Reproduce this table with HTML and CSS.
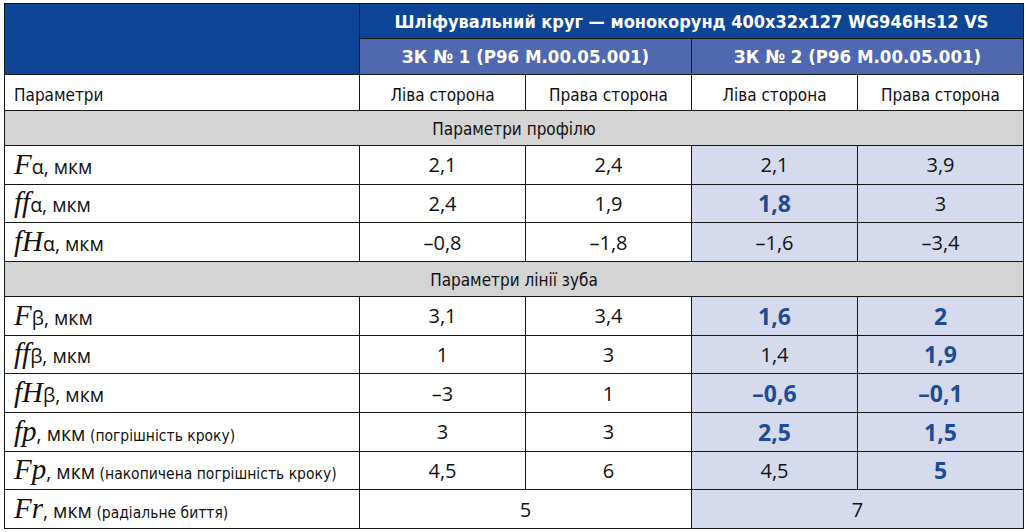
FILE: index.html
```html
<!DOCTYPE html>
<html lang="uk">
<head>
<meta charset="utf-8">
<title>Шліфувальний круг</title>
<link rel="stylesheet" href="styles.css">
</head>
<body>
<table class="grid">
  <colgroup>
    <col class="c-label">
    <col class="c-val">
    <col class="c-val">
    <col class="c-val">
    <col class="c-val">
  </colgroup>
  <tr class="row-title">
    <th class="corner" rowspan="2"></th>
    <th class="title" colspan="4">Шліфувальний круг — монокорунд 400x32x127 WG946Hs12 VS</th>
  </tr>
  <tr class="row-sub">
    <th class="sub" colspan="2">ЗК № 1 (Р96 М.00.05.001)</th>
    <th class="sub" colspan="2">ЗК № 2 (Р96 М.00.05.001)</th>
  </tr>
  <tr class="row-head">
    <td class="name">Параметри</td>
    <td>Ліва сторона</td>
    <td>Права сторона</td>
    <td>Ліва сторона</td>
    <td>Права сторона</td>
  </tr>
  <tr class="row-section">
    <td colspan="5">Параметри профілю</td>
  </tr>
  <tr class="row-data">
    <td class="name"><i class="sym">F</i><span class="unit">α, мкм</span></td>
    <td class="v">2,1</td><td class="v">2,4</td>
    <td class="v hl">2,1</td><td class="v hl">3,9</td>
  </tr>
  <tr class="row-data">
    <td class="name"><i class="sym">ff</i><span class="unit">α, мкм</span></td>
    <td class="v">2,4</td><td class="v">1,9</td>
    <td class="v hl"><b>1,8</b></td><td class="v hl">3</td>
  </tr>
  <tr class="row-data">
    <td class="name"><i class="sym">fH</i><span class="unit">α, мкм</span></td>
    <td class="v">–0,8</td><td class="v">–1,8</td>
    <td class="v hl">–1,6</td><td class="v hl">–3,4</td>
  </tr>
  <tr class="row-section">
    <td colspan="5">Параметри лінії зуба</td>
  </tr>
  <tr class="row-data">
    <td class="name"><i class="sym">F</i><span class="unit">β, мкм</span></td>
    <td class="v">3,1</td><td class="v">3,4</td>
    <td class="v hl"><b>1,6</b></td><td class="v hl"><b>2</b></td>
  </tr>
  <tr class="row-data">
    <td class="name"><i class="sym">ff</i><span class="unit">β, мкм</span></td>
    <td class="v">1</td><td class="v">3</td>
    <td class="v hl">1,4</td><td class="v hl"><b>1,9</b></td>
  </tr>
  <tr class="row-data">
    <td class="name"><i class="sym">fH</i><span class="unit">β, мкм</span></td>
    <td class="v">–3</td><td class="v">1</td>
    <td class="v hl"><b>–0,6</b></td><td class="v hl"><b>–0,1</b></td>
  </tr>
  <tr class="row-data">
    <td class="name"><i class="sym">fp</i><span class="unit">, мкм</span> <span class="note">(погрішність кроку)</span></td>
    <td class="v">3</td><td class="v">3</td>
    <td class="v hl"><b>2,5</b></td><td class="v hl"><b>1,5</b></td>
  </tr>
  <tr class="row-data">
    <td class="name"><i class="sym">Fp</i><span class="unit">, мкм</span> <span class="note">(накопичена погрішність кроку)</span></td>
    <td class="v">4,5</td><td class="v">6</td>
    <td class="v hl">4,5</td><td class="v hl"><b>5</b></td>
  </tr>
  <tr class="row-data">
    <td class="name"><i class="sym">Fr</i><span class="unit">, мкм</span> <span class="note">(радіальне биття)</span></td>
    <td class="v" colspan="2">5</td>
    <td class="v hl" colspan="2">7</td>
  </tr>
</table>
</body>
</html>
```

FILE: styles.css
```css
html, body {
  margin: 0;
  padding: 0;
  background: #ffffff;
}

body {
  padding: 3px 0 0 4px;
}

.grid {
  border-collapse: collapse;
  table-layout: fixed;
  width: 1019px;
  font-family: "DejaVu Sans Condensed", "Liberation Sans", sans-serif;
  font-stretch: condensed;
  color: #111;
}

.c-label { width: 355px; }
.c-val { width: 166px; }

.grid th,
.grid td {
  border: 1px solid #161616;
  padding: 0;
  text-align: center;
  vertical-align: middle;
  overflow: hidden;
  white-space: nowrap;
}

.row-title { height: 35px; }
.row-sub { height: 36px; }
.row-head { height: 36px; }
.row-section { height: 35px; }
.row-data { height: 38.67px; }

.corner {
  background: #0e4597;
}

.title {
  background: #0e4597;
  color: #ffffff;
  font-weight: bold;
  font-size: 18px;
  padding-top: 1px;
}

.sub {
  background: #5068b0;
  color: #ffffff;
  font-weight: bold;
  font-size: 18.5px;
  padding-top: 2px;
}

.row-head td {
  font-size: 17px;
  padding-top: 4px;
}

.row-section td {
  background: #d4d4d4;
  font-size: 17px;
  padding-top: 2px;
}

.grid td.name {
  text-align: left;
  padding-left: 9px;
}

.sym {
  font-family: "Liberation Serif", "DejaVu Serif", serif;
  font-stretch: normal;
  font-style: italic;
  font-size: 29px;
  line-height: 1;
}

.unit {
  font-family: "Open Sans", "DejaVu Sans", sans-serif;
  font-stretch: normal;
  font-size: 19.5px;
}

.note {
  font-size: 15.5px;
}

.v {
  font-family: "Open Sans", "DejaVu Sans", sans-serif;
  font-stretch: normal;
  font-size: 20px;
  padding-top: 2px;
}

.v b {
  color: #1c4c98;
  font-weight: bold;
  font-size: 23px;
}

.hl {
  background: #d5dbed;
}
```
